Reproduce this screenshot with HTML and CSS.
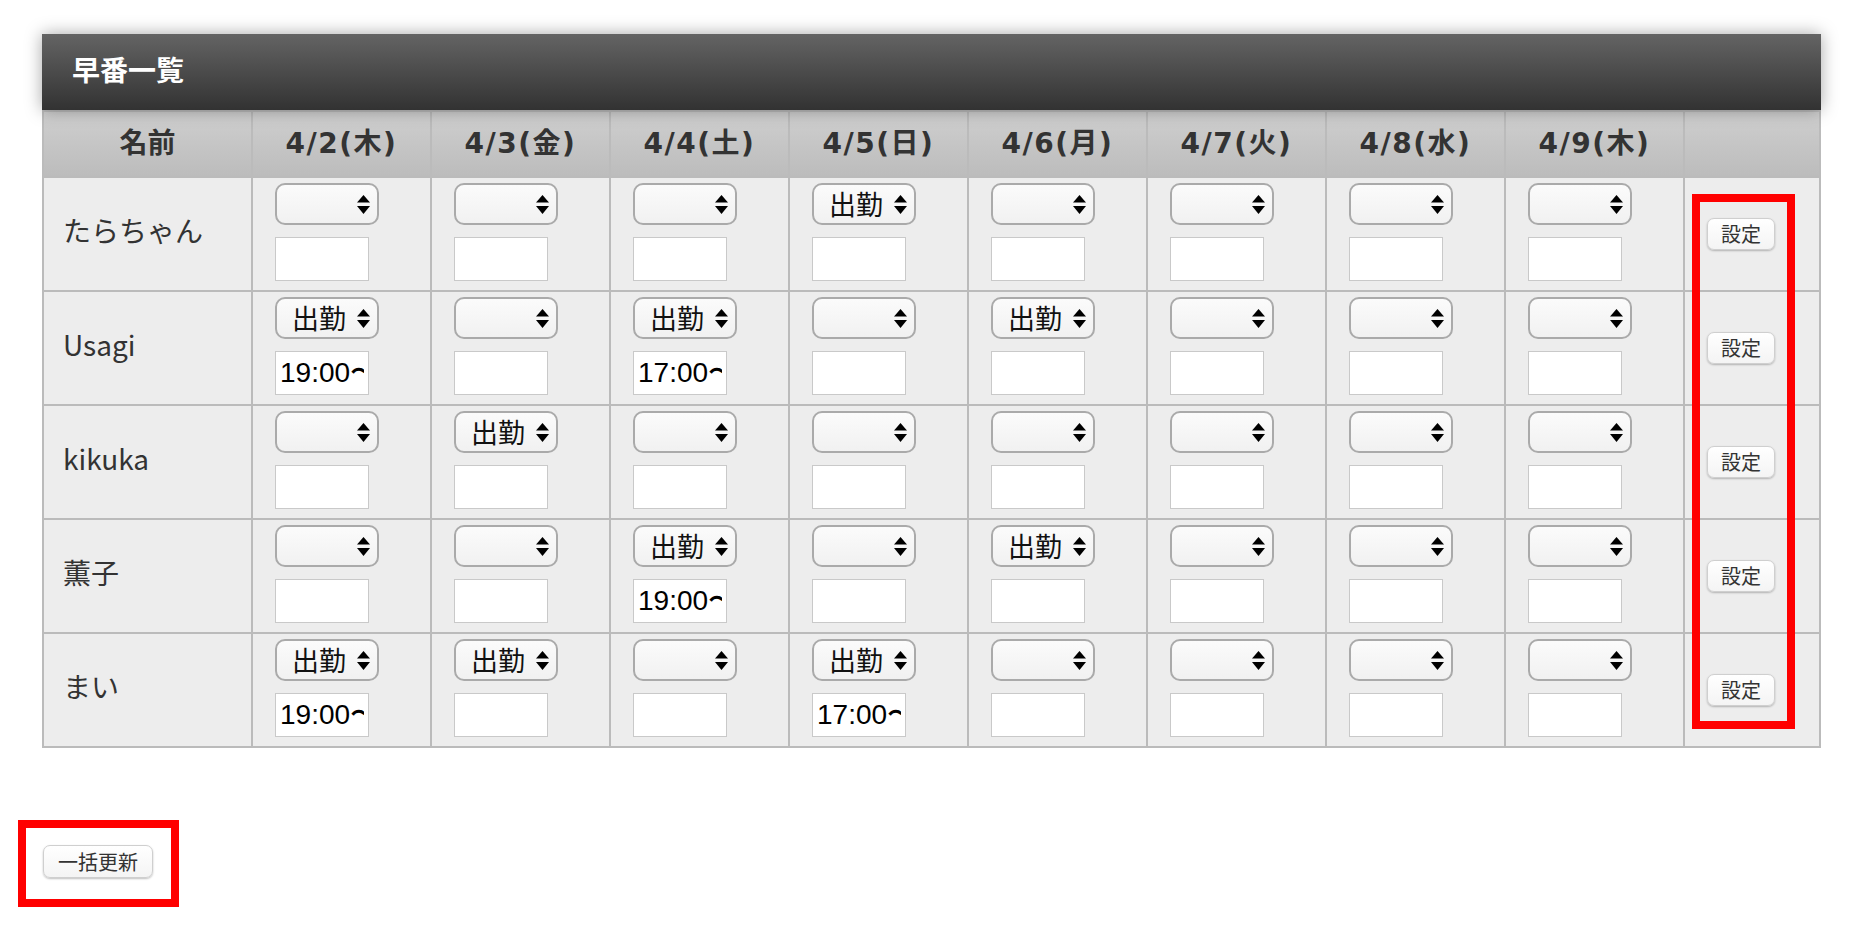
FILE: index.html
```html
<!DOCTYPE html>
<html lang="ja">
<head>
  <meta charset="UTF-8" />
  <title>早番一覧</title>
  <link rel="stylesheet" href="styles.css">
</head>
<body>
<div class="page">

  <!-- 一覧 -->
  <div class="board">
    <div class="board-title">早番一覧</div>
    <table class="shift-table">
      <thead>
        <tr>
          <th class="col-name">名前</th>
          <th>4/2(木)</th>
          <th>4/3(金)</th>
          <th>4/4(土)</th>
          <th>4/5(日)</th>
          <th>4/6(月)</th>
          <th>4/7(火)</th>
          <th>4/8(水)</th>
          <th>4/9(木)</th>
          <th class="col-set"></th>
        </tr>
      </thead>
      <tbody>
        <!-- たらちゃん -->
        <tr>
          <td class="name">たらちゃん</td>
          <td><span class="pick"><select><option></option><option>出勤</option></select><svg viewBox="0 0 13 19"><polygon points="6.5,0 13,7.5 0,7.5"/><polygon points="0,11 13,11 6.5,19"/></svg></span><input type="text" value=""></td>
          <td><span class="pick"><select><option></option><option>出勤</option></select><svg viewBox="0 0 13 19"><polygon points="6.5,0 13,7.5 0,7.5"/><polygon points="0,11 13,11 6.5,19"/></svg></span><input type="text" value=""></td>
          <td><span class="pick"><select><option></option><option>出勤</option></select><svg viewBox="0 0 13 19"><polygon points="6.5,0 13,7.5 0,7.5"/><polygon points="0,11 13,11 6.5,19"/></svg></span><input type="text" value=""></td>
          <td><span class="pick"><select><option></option><option selected>出勤</option></select><svg viewBox="0 0 13 19"><polygon points="6.5,0 13,7.5 0,7.5"/><polygon points="0,11 13,11 6.5,19"/></svg></span><input type="text" value=""></td>
          <td><span class="pick"><select><option></option><option>出勤</option></select><svg viewBox="0 0 13 19"><polygon points="6.5,0 13,7.5 0,7.5"/><polygon points="0,11 13,11 6.5,19"/></svg></span><input type="text" value=""></td>
          <td><span class="pick"><select><option></option><option>出勤</option></select><svg viewBox="0 0 13 19"><polygon points="6.5,0 13,7.5 0,7.5"/><polygon points="0,11 13,11 6.5,19"/></svg></span><input type="text" value=""></td>
          <td><span class="pick"><select><option></option><option>出勤</option></select><svg viewBox="0 0 13 19"><polygon points="6.5,0 13,7.5 0,7.5"/><polygon points="0,11 13,11 6.5,19"/></svg></span><input type="text" value=""></td>
          <td><span class="pick"><select><option></option><option>出勤</option></select><svg viewBox="0 0 13 19"><polygon points="6.5,0 13,7.5 0,7.5"/><polygon points="0,11 13,11 6.5,19"/></svg></span><input type="text" value=""></td>
          <td class="set"><button class="btn btn-set">設定</button></td>
        </tr>
        <!-- Usagi -->
        <tr>
          <td class="name">Usagi</td>
          <td><span class="pick"><select><option></option><option selected>出勤</option></select><svg viewBox="0 0 13 19"><polygon points="6.5,0 13,7.5 0,7.5"/><polygon points="0,11 13,11 6.5,19"/></svg></span><input type="text" value="19:00〜"></td>
          <td><span class="pick"><select><option></option><option>出勤</option></select><svg viewBox="0 0 13 19"><polygon points="6.5,0 13,7.5 0,7.5"/><polygon points="0,11 13,11 6.5,19"/></svg></span><input type="text" value=""></td>
          <td><span class="pick"><select><option></option><option selected>出勤</option></select><svg viewBox="0 0 13 19"><polygon points="6.5,0 13,7.5 0,7.5"/><polygon points="0,11 13,11 6.5,19"/></svg></span><input type="text" value="17:00〜"></td>
          <td><span class="pick"><select><option></option><option>出勤</option></select><svg viewBox="0 0 13 19"><polygon points="6.5,0 13,7.5 0,7.5"/><polygon points="0,11 13,11 6.5,19"/></svg></span><input type="text" value=""></td>
          <td><span class="pick"><select><option></option><option selected>出勤</option></select><svg viewBox="0 0 13 19"><polygon points="6.5,0 13,7.5 0,7.5"/><polygon points="0,11 13,11 6.5,19"/></svg></span><input type="text" value=""></td>
          <td><span class="pick"><select><option></option><option>出勤</option></select><svg viewBox="0 0 13 19"><polygon points="6.5,0 13,7.5 0,7.5"/><polygon points="0,11 13,11 6.5,19"/></svg></span><input type="text" value=""></td>
          <td><span class="pick"><select><option></option><option>出勤</option></select><svg viewBox="0 0 13 19"><polygon points="6.5,0 13,7.5 0,7.5"/><polygon points="0,11 13,11 6.5,19"/></svg></span><input type="text" value=""></td>
          <td><span class="pick"><select><option></option><option>出勤</option></select><svg viewBox="0 0 13 19"><polygon points="6.5,0 13,7.5 0,7.5"/><polygon points="0,11 13,11 6.5,19"/></svg></span><input type="text" value=""></td>
          <td class="set"><button class="btn btn-set">設定</button></td>
        </tr>
        <!-- kikuka -->
        <tr>
          <td class="name">kikuka</td>
          <td><span class="pick"><select><option></option><option>出勤</option></select><svg viewBox="0 0 13 19"><polygon points="6.5,0 13,7.5 0,7.5"/><polygon points="0,11 13,11 6.5,19"/></svg></span><input type="text" value=""></td>
          <td><span class="pick"><select><option></option><option selected>出勤</option></select><svg viewBox="0 0 13 19"><polygon points="6.5,0 13,7.5 0,7.5"/><polygon points="0,11 13,11 6.5,19"/></svg></span><input type="text" value=""></td>
          <td><span class="pick"><select><option></option><option>出勤</option></select><svg viewBox="0 0 13 19"><polygon points="6.5,0 13,7.5 0,7.5"/><polygon points="0,11 13,11 6.5,19"/></svg></span><input type="text" value=""></td>
          <td><span class="pick"><select><option></option><option>出勤</option></select><svg viewBox="0 0 13 19"><polygon points="6.5,0 13,7.5 0,7.5"/><polygon points="0,11 13,11 6.5,19"/></svg></span><input type="text" value=""></td>
          <td><span class="pick"><select><option></option><option>出勤</option></select><svg viewBox="0 0 13 19"><polygon points="6.5,0 13,7.5 0,7.5"/><polygon points="0,11 13,11 6.5,19"/></svg></span><input type="text" value=""></td>
          <td><span class="pick"><select><option></option><option>出勤</option></select><svg viewBox="0 0 13 19"><polygon points="6.5,0 13,7.5 0,7.5"/><polygon points="0,11 13,11 6.5,19"/></svg></span><input type="text" value=""></td>
          <td><span class="pick"><select><option></option><option>出勤</option></select><svg viewBox="0 0 13 19"><polygon points="6.5,0 13,7.5 0,7.5"/><polygon points="0,11 13,11 6.5,19"/></svg></span><input type="text" value=""></td>
          <td><span class="pick"><select><option></option><option>出勤</option></select><svg viewBox="0 0 13 19"><polygon points="6.5,0 13,7.5 0,7.5"/><polygon points="0,11 13,11 6.5,19"/></svg></span><input type="text" value=""></td>
          <td class="set"><button class="btn btn-set">設定</button></td>
        </tr>
        <!-- 薫子 -->
        <tr>
          <td class="name">薫子</td>
          <td><span class="pick"><select><option></option><option>出勤</option></select><svg viewBox="0 0 13 19"><polygon points="6.5,0 13,7.5 0,7.5"/><polygon points="0,11 13,11 6.5,19"/></svg></span><input type="text" value=""></td>
          <td><span class="pick"><select><option></option><option>出勤</option></select><svg viewBox="0 0 13 19"><polygon points="6.5,0 13,7.5 0,7.5"/><polygon points="0,11 13,11 6.5,19"/></svg></span><input type="text" value=""></td>
          <td><span class="pick"><select><option></option><option selected>出勤</option></select><svg viewBox="0 0 13 19"><polygon points="6.5,0 13,7.5 0,7.5"/><polygon points="0,11 13,11 6.5,19"/></svg></span><input type="text" value="19:00〜"></td>
          <td><span class="pick"><select><option></option><option>出勤</option></select><svg viewBox="0 0 13 19"><polygon points="6.5,0 13,7.5 0,7.5"/><polygon points="0,11 13,11 6.5,19"/></svg></span><input type="text" value=""></td>
          <td><span class="pick"><select><option></option><option selected>出勤</option></select><svg viewBox="0 0 13 19"><polygon points="6.5,0 13,7.5 0,7.5"/><polygon points="0,11 13,11 6.5,19"/></svg></span><input type="text" value=""></td>
          <td><span class="pick"><select><option></option><option>出勤</option></select><svg viewBox="0 0 13 19"><polygon points="6.5,0 13,7.5 0,7.5"/><polygon points="0,11 13,11 6.5,19"/></svg></span><input type="text" value=""></td>
          <td><span class="pick"><select><option></option><option>出勤</option></select><svg viewBox="0 0 13 19"><polygon points="6.5,0 13,7.5 0,7.5"/><polygon points="0,11 13,11 6.5,19"/></svg></span><input type="text" value=""></td>
          <td><span class="pick"><select><option></option><option>出勤</option></select><svg viewBox="0 0 13 19"><polygon points="6.5,0 13,7.5 0,7.5"/><polygon points="0,11 13,11 6.5,19"/></svg></span><input type="text" value=""></td>
          <td class="set"><button class="btn btn-set">設定</button></td>
        </tr>
        <!-- まい -->
        <tr>
          <td class="name">まい</td>
          <td><span class="pick"><select><option></option><option selected>出勤</option></select><svg viewBox="0 0 13 19"><polygon points="6.5,0 13,7.5 0,7.5"/><polygon points="0,11 13,11 6.5,19"/></svg></span><input type="text" value="19:00〜"></td>
          <td><span class="pick"><select><option></option><option selected>出勤</option></select><svg viewBox="0 0 13 19"><polygon points="6.5,0 13,7.5 0,7.5"/><polygon points="0,11 13,11 6.5,19"/></svg></span><input type="text" value=""></td>
          <td><span class="pick"><select><option></option><option>出勤</option></select><svg viewBox="0 0 13 19"><polygon points="6.5,0 13,7.5 0,7.5"/><polygon points="0,11 13,11 6.5,19"/></svg></span><input type="text" value=""></td>
          <td><span class="pick"><select><option></option><option selected>出勤</option></select><svg viewBox="0 0 13 19"><polygon points="6.5,0 13,7.5 0,7.5"/><polygon points="0,11 13,11 6.5,19"/></svg></span><input type="text" value="17:00〜"></td>
          <td><span class="pick"><select><option></option><option>出勤</option></select><svg viewBox="0 0 13 19"><polygon points="6.5,0 13,7.5 0,7.5"/><polygon points="0,11 13,11 6.5,19"/></svg></span><input type="text" value=""></td>
          <td><span class="pick"><select><option></option><option>出勤</option></select><svg viewBox="0 0 13 19"><polygon points="6.5,0 13,7.5 0,7.5"/><polygon points="0,11 13,11 6.5,19"/></svg></span><input type="text" value=""></td>
          <td><span class="pick"><select><option></option><option>出勤</option></select><svg viewBox="0 0 13 19"><polygon points="6.5,0 13,7.5 0,7.5"/><polygon points="0,11 13,11 6.5,19"/></svg></span><input type="text" value=""></td>
          <td><span class="pick"><select><option></option><option>出勤</option></select><svg viewBox="0 0 13 19"><polygon points="6.5,0 13,7.5 0,7.5"/><polygon points="0,11 13,11 6.5,19"/></svg></span><input type="text" value=""></td>
          <td class="set"><button class="btn btn-set">設定</button></td>
        </tr>
      </tbody>
    </table>
  </div>

  <!-- 一括更新 -->
  <div class="actions">
    <button class="btn btn-bulk">一括更新</button>
  </div>

  <!-- 赤枠 (注釈) -->
  <div class="mark mark-set"></div>
  <div class="mark mark-bulk"></div>

</div>
</body>
</html>
```

FILE: styles.css
```css
body {
  margin: 0;
  padding: 0;
  background-color: #ffffff;
  font-family: "Noto Sans CJK JP", "Liberation Sans", sans-serif;
  color: #333;
}
.page {
  position: relative;
  box-sizing: border-box;
  min-height: 944px;
  padding: 34px 0 0 42px;
}
.board {
  width: 1779px;
}
.board-title {
  position: relative;
  z-index: 1;
  height: 76px;
  line-height: 70px;
  padding-left: 30px;
  background: linear-gradient(#646464, #323232);
  box-shadow: 0 0 16px rgba(0, 0, 0, 0.35);
  color: #ffffff;
  font-size: 28px;
  font-weight: bold;
}
.shift-table {
  width: 1779px;
  border-collapse: collapse;
  table-layout: fixed;
  border: 2px solid #bbb;
}
.shift-table th {
  height: 57px;
  padding: 0 0 7px 0;
  background: linear-gradient(#cfcfcf, #bcbcbc);
  border: 2px solid #bbb;
  font-family: "DejaVu Sans", "Noto Sans CJK JP", sans-serif;
  font-size: 28px;
  font-weight: bold;
  letter-spacing: 1.5px;
  color: #333;
  text-align: center;
}
.shift-table th.col-name {
  width: 207px;
  font-family: "Noto Sans CJK JP", sans-serif;
  letter-spacing: 0;
}
.shift-table th.col-set {
  width: 134px;
}
.shift-table td {
  padding: 5px 0 9px 22px;
  background-color: #ededed;
  border: 2px solid #bbb;
  vertical-align: top;
}
.shift-table td.name {
  padding: 0 0 8px 19px;
  vertical-align: middle;
  font-size: 28px;
  line-height: 32px;
  color: #333;
}
.shift-table td.set {
  padding: 0 0 0 22px;
  vertical-align: middle;
}
.pick {
  position: relative;
  display: block;
  width: 104px;
  height: 42px;
}
.pick select {
  -webkit-appearance: none;
  appearance: none;
  width: 104px;
  height: 42px;
  box-sizing: border-box;
  margin: 0;
  padding: 0 0 0 15px;
  border: 2px solid #aaa;
  border-radius: 10px;
  background: linear-gradient(#fbfbfb, #f1f1f1);
  font-family: "Noto Sans CJK JP", sans-serif;
  font-size: 27px;
  line-height: 38px;
  color: #111;
}
.pick svg {
  position: absolute;
  top: 12px;
  right: 9px;
  width: 13px;
  height: 19px;
  fill: #000;
  pointer-events: none;
}
.shift-table input[type="text"] {
  display: block;
  width: 84px;
  height: 42px;
  box-sizing: content-box;
  margin: 12px 0 0 0;
  padding: 0 4px;
  border: 1px solid #c9c9c9;
  background-color: #ffffff;
  font-family: "Liberation Sans", sans-serif;
  font-size: 28px;
  color: #000;
}
.btn {
  box-sizing: border-box;
  padding: 0;
  border: 1px solid #cfcfcf;
  border-radius: 7px;
  background: linear-gradient(#ffffff, #f4f4f4);
  box-shadow: 0 1px 2px rgba(0, 0, 0, 0.25);
  font-family: "Noto Sans CJK JP", sans-serif;
  font-size: 20px;
  color: #333;
  cursor: pointer;
}
.btn-set {
  width: 68px;
  height: 32px;
  line-height: 28px;
}
.actions {
  margin-top: 97px;
  padding-left: 1px;
}
.btn-bulk {
  width: 110px;
  height: 33px;
  line-height: 29px;
}
.mark {
  position: absolute;
  border: 8px solid #ff0000;
  box-sizing: border-box;
}
.mark-set {
  left: 1692px;
  top: 194px;
  width: 103px;
  height: 535px;
}
.mark-bulk {
  left: 18px;
  top: 820px;
  width: 161px;
  height: 87px;
}
```
